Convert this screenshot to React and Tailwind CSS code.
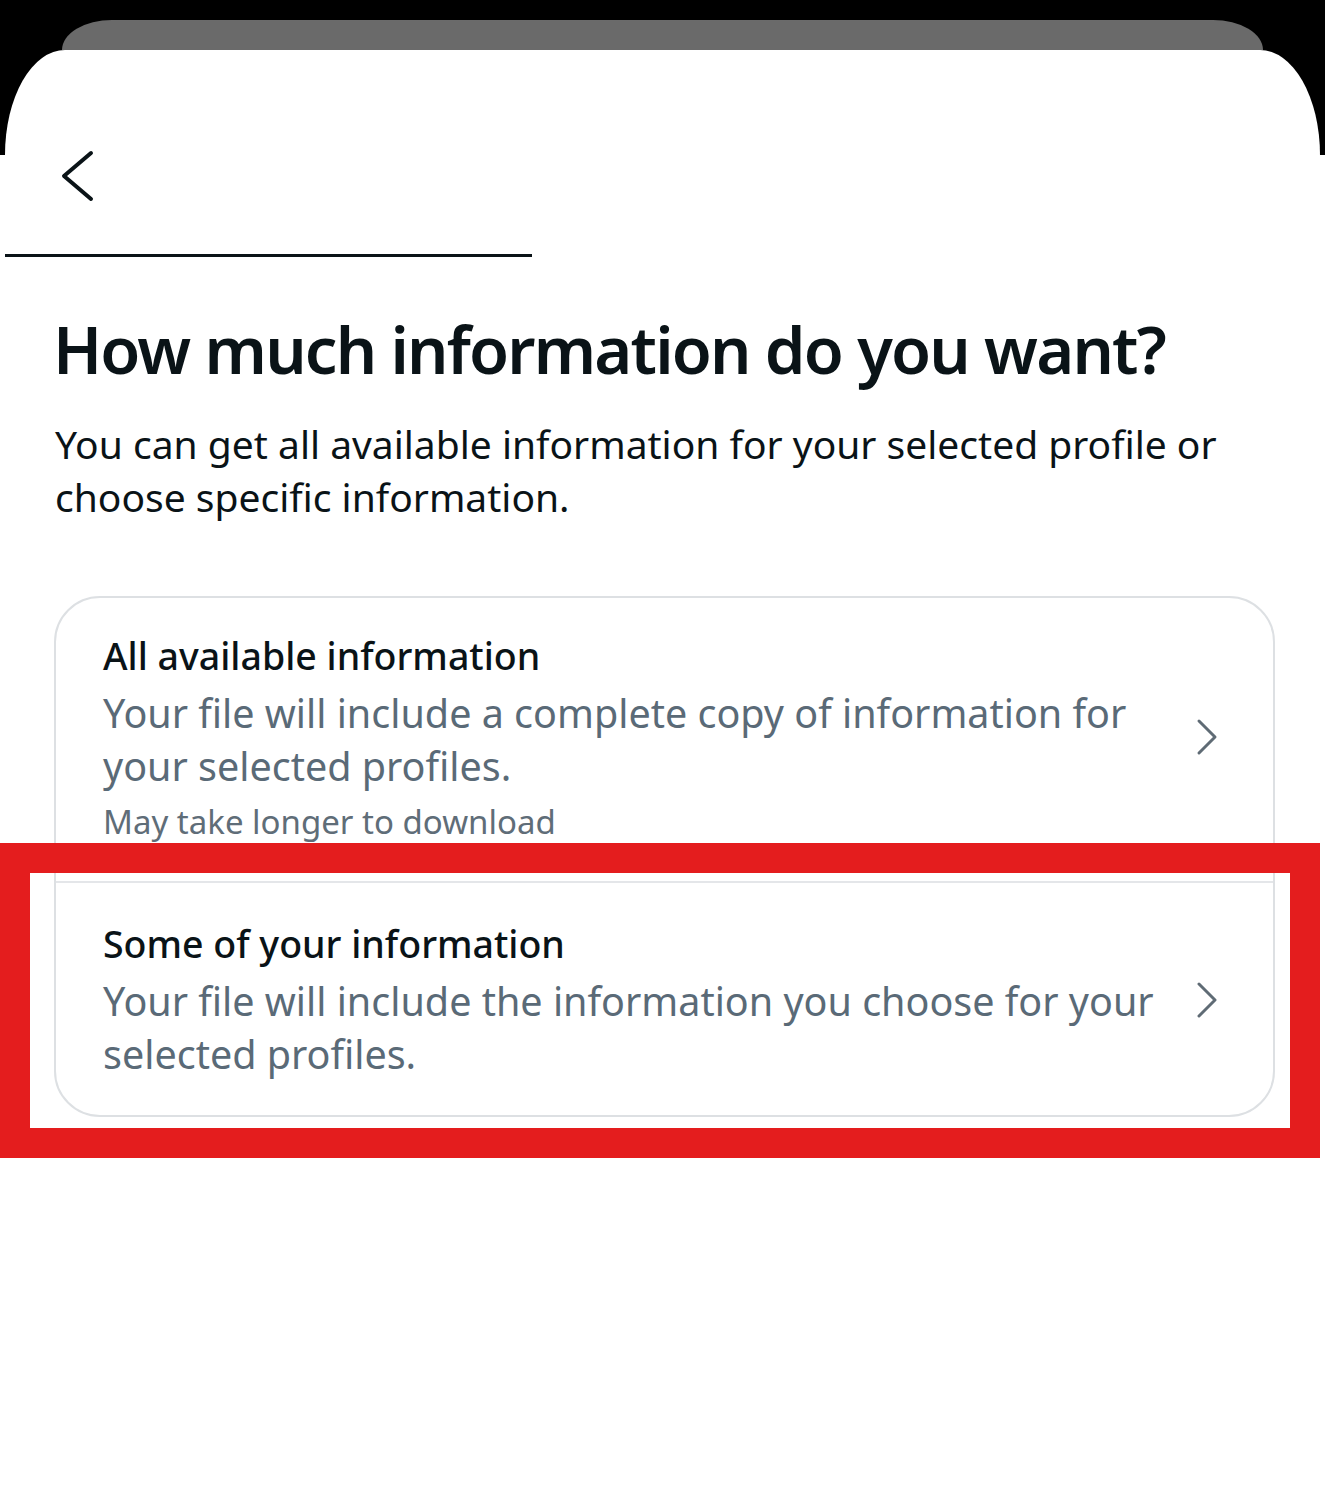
import React from "react";

function BackIcon() {
  return (
    <svg className="w-[34px] h-[52px] text-[#0a1317]" viewBox="0 0 34 52" fill="none" stroke="currentColor">
      <path d="M31 3 L4 26 L31 49" strokeWidth={4} strokeLinecap="round" strokeLinejoin="round" />
    </svg>
  );
}

function ArrowIcon() {
  return (
    <svg className="w-[24px] h-[38px] text-[#5f6b75] shrink-0" viewBox="0 0 24 38" fill="none" stroke="currentColor">
      <path d="M4 3 L20 19 L4 35" strokeWidth={3} strokeLinecap="round" strokeLinejoin="round" />
    </svg>
  );
}

function Option({ title, desc, note, last }) {
  return (
    <div
      className={`flex items-center pl-[47px] pr-[54px] ${
        last ? "pt-[35px] pb-[34px]" : "pt-[32px] pb-[37px] border-b-2 border-[#e4e6e9]"
      }`}
    >
      <div className="flex-1">
        <div className="text-[37.5px] leading-[52px] font-medium text-[#0a1317]">{title}</div>
        <div className="text-[39.5px] leading-[53px] text-[#5a6a77] mt-[5px]">{desc}</div>
        {note && (
          <div className="text-[33px] leading-[44px] text-[#5f6d78] mt-[7px]">{note}</div>
        )}
      </div>
      <div className="ml-[28px]">
        <ArrowIcon />
      </div>
    </div>
  );
}

export default function App() {
  return (
    <div
      className="relative w-[1325px] h-[1486px] bg-white overflow-hidden"
      style={{ fontFamily: '"Noto Sans", "Liberation Sans", sans-serif' }}
    >
      <div className="bg-black pt-[20px]">
        <div className="mx-[62px] h-[30px] bg-[#6a6a6a] rounded-t-[50px_30px]" />
        <div className="mx-[5px] h-[105px] bg-white rounded-t-[60px_105px]" />
      </div>

      <div className="pl-[60px] -mt-[5px]">
        <BackIcon />
      </div>
      <div className="ml-[5px] w-[527px] h-[3px] bg-[#0a1317] mt-[52px]" />

      <div className="pl-[55px] pr-[50px]">
        <h1 className="mt-[52px] -ml-[2px] text-[65px] leading-[80px] font-semibold text-[#0a1317] tracking-[-1.8px]">
          How much information do you want?
        </h1>
        <p className="mt-[28px] text-[39px] leading-[53px] text-[#0a1317]">
          You can get all available information for your selected profile or choose specific information.
        </p>

        <div className="mt-[73px] -ml-[1px] border-2 border-[#dde0e3] rounded-[46px]">
          <Option
            title="All available information"
            desc="Your file will include a complete copy of information for your selected profiles."
            note="May take longer to download"
          />
          <Option
            title="Some of your information"
            desc="Your file will include the information you choose for your selected profiles."
            last
          />
        </div>
      </div>

      <div className="absolute left-0 top-[843px] w-[1320px] h-[315px] border-[30px] border-[#e41d1e]" />
    </div>
  );
}
